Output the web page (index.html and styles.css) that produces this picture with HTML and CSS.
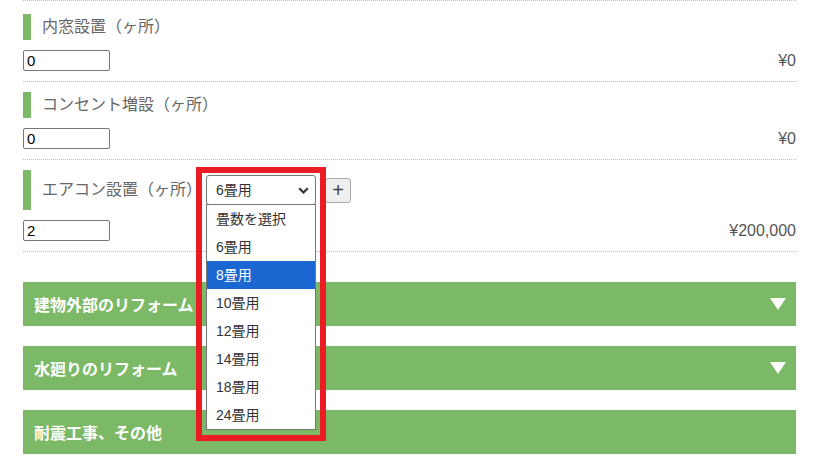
FILE: index.html
```html
<!DOCTYPE html>
<html>
<head>
    <title>リフォーム見積もり</title>
    <link rel="stylesheet" href="styles.css">
</head>
<body>
    <div class="estimate">
        <div class="item">
            <div class="item-label">内窓設置（ヶ所）</div>
            <div class="item-row">
                <input type="text" class="qty" value="0">
                <span class="price">¥0</span>
            </div>
        </div>
        <div class="item">
            <div class="item-label">コンセント増設（ヶ所）</div>
            <div class="item-row">
                <input type="text" class="qty" value="0">
                <span class="price">¥0</span>
            </div>
        </div>
        <div class="item">
            <div class="item-label">
                <span>エアコン設置（ヶ所）</span>
                <span class="size-picker">
                    <select class="size-select">
                        <option>6畳用</option>
                    </select>
                    <svg class="chevron" width="11" height="7" viewBox="0 0 11 7"><path d="M1.2 1.2l4.3 4.3 4.3-4.3" fill="none" stroke="#333" stroke-width="2.2"/></svg>
                    <ul class="size-list">
                        <li>畳数を選択</li>
                        <li>6畳用</li>
                        <li class="active">8畳用</li>
                        <li>10畳用</li>
                        <li>12畳用</li>
                        <li>14畳用</li>
                        <li>18畳用</li>
                        <li>24畳用</li>
                    </ul>
                    <span class="mark"></span>
                </span>
                <button class="add-btn">+</button>
            </div>
            <div class="item-row">
                <input type="text" class="qty" value="2">
                <span class="price">¥200,000</span>
            </div>
        </div>

        <div class="section">建物外部のリフォーム<span class="arrow"></span></div>
        <div class="section">水廻りのリフォーム<span class="arrow"></span></div>
        <div class="section">耐震工事、その他</div>
    </div>
</body>
</html>
```

FILE: styles.css
```css
body {
    margin: 0;
    font-family: "Liberation Sans", "Noto Sans CJK JP", sans-serif;
    background-color: #fff;
    color: #333;
}

.estimate {
    width: 773px;
    margin-left: 23px;
    padding-top: 3px;
    border-top: 1px dotted #bbb;
}

.item {
    padding: 10px 0;
    border-bottom: 1px dotted #bbb;
}

.item-label {
    display: flex;
    align-items: center;
    padding: 5px 0 5px 11px;
    border-left: 8px solid #7cb967;
    font-size: 16px;
    line-height: 16px;
    color: #666;
}

.item-row {
    display: flex;
    justify-content: space-between;
    align-items: center;
    margin-top: 10px;
}

.qty {
    box-sizing: border-box;
    width: 87px;
    height: 21px;
    margin: 0;
    padding: 0 3px;
    border: 1px solid #767676;
    border-radius: 2px;
    font-family: "Liberation Sans", sans-serif;
    font-size: 15px;
    color: #000;
}

.price {
    font-size: 16px;
    color: #555;
}

.size-picker {
    position: relative;
    margin-left: 4px;
}

.size-select {
    display: block;
    box-sizing: border-box;
    width: 110px;
    height: 30px;
    padding: 0 9px;
    border: 1px solid #767676;
    border-radius: 3px;
    background-color: #fff;
    font-family: "Liberation Sans", "Noto Sans CJK JP", sans-serif;
    font-size: 14px;
    color: #333;
    appearance: none;
}

.chevron {
    position: absolute;
    right: 7px;
    top: 12px;
}

.size-list {
    position: absolute;
    top: 29px;
    left: 0;
    box-sizing: border-box;
    width: 110px;
    margin: 0;
    padding: 0;
    list-style: none;
    background-color: #fff;
    border: 1px solid #767676;
    z-index: 2;
}

.size-list li {
    height: 28px;
    line-height: 28px;
    padding-left: 9px;
    font-size: 14px;
    color: #333;
}

.size-list li.active {
    background-color: #1a67d2;
    color: #fff;
}

.mark {
    position: absolute;
    left: -10px;
    top: -8px;
    box-sizing: border-box;
    width: 130px;
    height: 274px;
    border: 6px solid #ec1c24;
    z-index: 3;
}

.add-btn {
    box-sizing: border-box;
    width: 26px;
    height: 25px;
    margin-left: 9px;
    padding: 0;
    border: 1px solid #aaa;
    border-radius: 3px;
    background-color: #efefef;
    font-family: "Liberation Sans", sans-serif;
    font-size: 20px;
    font-weight: 300;
    line-height: 22px;
    color: #444;
}

.section {
    display: flex;
    justify-content: space-between;
    align-items: center;
    height: 44px;
    margin-top: 20px;
    padding: 0 10px 0 11px;
    background-color: #7cb967;
    font-size: 16px;
    font-weight: bold;
    color: #fff;
}

.item + .section {
    margin-top: 30px;
}

.arrow {
    width: 0;
    height: 0;
    border-left: 8px solid transparent;
    border-right: 8px solid transparent;
    border-top: 12px solid #fff;
}
```
